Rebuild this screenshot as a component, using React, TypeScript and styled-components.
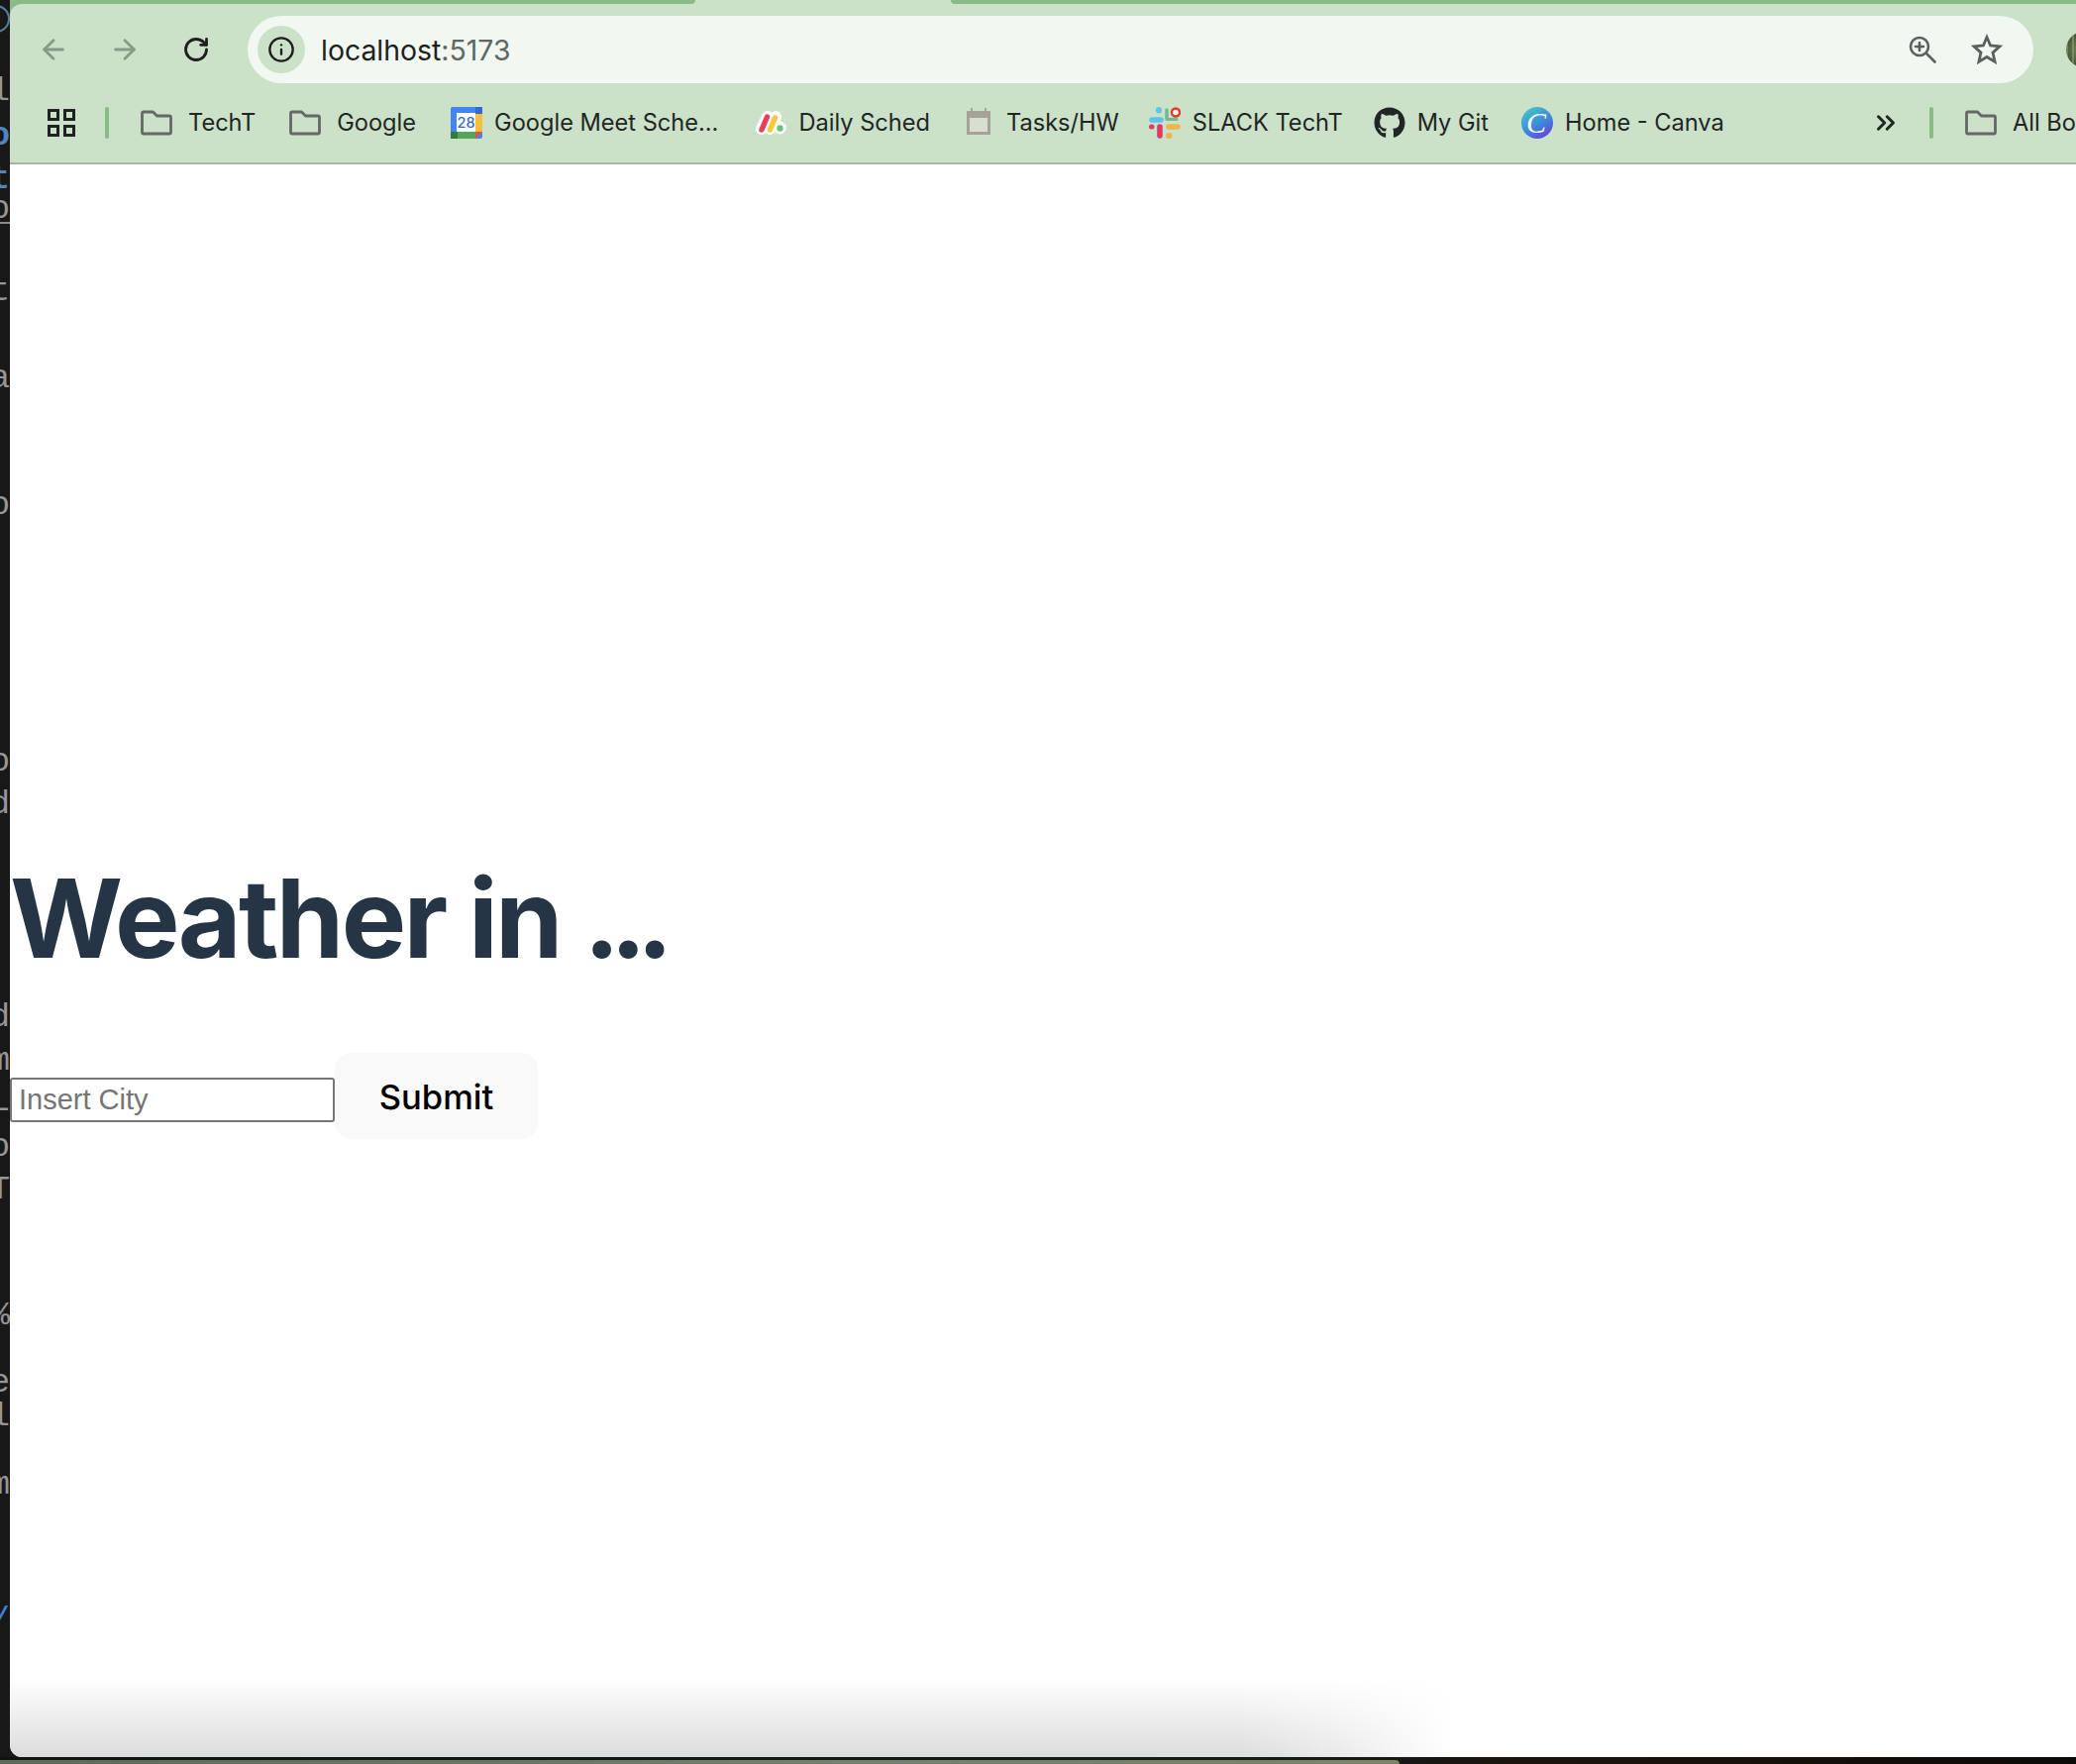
import React from 'react';
import styled, { createGlobalStyle } from 'styled-components';
import { ArrowLeft, ArrowRight, ChevronsRight, Info, RotateCw } from 'lucide-react';
import { FaGithub } from 'react-icons/fa';

const GlobalStyle = createGlobalStyle`
  html, body {
    margin: 0;
    padding: 0;
    background: #181818;
  }
  * {
    box-sizing: border-box;
  }
`;

const Screen = styled.div`
  width: 2096px;
  height: 1781px;
  display: flex;
  flex-direction: column;
  overflow: hidden;
  background: #181818;
`;

const Desk = styled.div`
  height: 1774px;
  display: flex;
`;

const EditorStrip = styled.div`
  width: 10px;
  flex-shrink: 0;
  display: flex;
  flex-direction: column;
  overflow: hidden;
  background: #181818;
`;

const CodeLine = styled.div<{ $gap: number; $color: string; $bold?: boolean; $underline?: boolean }>`
  height: 28px;
  flex-shrink: 0;
  margin-top: ${(p) => p.$gap}px;
  display: flex;
  justify-content: flex-end;
  align-items: center;
  white-space: nowrap;
  font-family: 'Liberation Mono', monospace;
  font-size: 33px;
  font-weight: ${(p) => (p.$bold ? 700 : 400)};
  color: ${(p) => p.$color};
  border-bottom: ${(p) => (p.$underline ? '2px solid #8a8a8a' : 'none')};
`;

const Ring = styled.div`
  width: 28px;
  height: 28px;
  flex-shrink: 0;
  margin: 5px 0 0 -18px;
  border: 2px solid #55809f;
  border-radius: 50%;
`;

const BrowserWindow = styled.div`
  flex: 1;
  min-width: 0;
  display: flex;
  flex-direction: column;
  overflow: hidden;
  background: #8aba85;
  border-bottom-left-radius: 12px;
`;

const TabStrip = styled.div`
  height: 4px;
  flex-shrink: 0;
  display: flex;
  background: #cbe1c8;
`;

const TabSegment = styled.div<{ $side: 'left' | 'right' }>`
  background: #8aba85;
  width: ${(p) => (p.$side === 'left' ? '692px' : 'auto')};
  flex: ${(p) => (p.$side === 'left' ? '0 0 auto' : '1')};
  margin-left: ${(p) => (p.$side === 'left' ? '0' : '258px')};
  border-bottom-right-radius: ${(p) => (p.$side === 'left' ? '8px' : '0')};
  border-bottom-left-radius: ${(p) => (p.$side === 'left' ? '0' : '8px')};
`;

const Toolbar = styled.div`
  height: 80px;
  flex-shrink: 0;
  display: flex;
  align-items: center;
  padding: 12px 0 0 8px;
  overflow: hidden;
  background: #cbe1c8;
  border-top-left-radius: 12px;
`;

const NavButton = styled.button<{ $muted?: boolean }>`
  width: 72px;
  height: 68px;
  flex-shrink: 0;
  padding: 0;
  display: flex;
  align-items: center;
  justify-content: center;
  border: none;
  background: none;
  color: ${(p) => (p.$muted ? '#879a87' : '#1f1f1f')};
`;

const Omnibox = styled.div`
  width: 1803px;
  height: 68px;
  flex-shrink: 0;
  margin-left: 16px;
  display: flex;
  align-items: center;
  padding: 0 15px 0 10px;
  background: #f1f8f1;
  border-radius: 34px;
`;

const InfoChip = styled.div`
  width: 48px;
  height: 48px;
  flex-shrink: 0;
  display: flex;
  align-items: center;
  justify-content: center;
  border-radius: 50%;
  background: #cbe1c8;
  color: #1f1f1f;
`;

const Url = styled.div`
  flex: 1;
  margin-left: 16px;
  font-family: Inter, sans-serif;
  font-size: 28.4px;
  color: #1f1f1f;
`;

const UrlPort = styled.span`
  color: #5f6663;
`;

const BoxAction = styled.div`
  width: 65px;
  display: flex;
  justify-content: center;
  color: #5c605d;
`;

const Avatar = styled.div`
  width: 36px;
  height: 36px;
  flex-shrink: 0;
  margin-left: 33px;
  border-radius: 50%;
  background:
    repeating-linear-gradient(to right, rgba(190, 200, 170, 0.35) 0 2px, transparent 2px 6px),
    radial-gradient(circle at 40% 50%, #6f8a5a, #3c4a2a 70%);
`;

const BookmarksBar = styled.div`
  height: 82px;
  flex-shrink: 0;
  display: flex;
  align-items: center;
  gap: 33px;
  padding-left: 38px;
  overflow: hidden;
  background: #cbe1c8;
  border-bottom: 2px solid #a3b8a0;
`;

const AppsIcon = styled.svg`
  width: 28px;
  height: 28px;
  flex-shrink: 0;
`;

const Divider = styled.div`
  width: 4px;
  height: 32px;
  flex-shrink: 0;
  margin: 0 -5px 0 -3px;
  border-radius: 2px;
  background: #8aba85;
`;

const Bookmark = styled.div<{ $nudge?: number }>`
  display: flex;
  align-items: center;
  gap: 12px;
  flex-shrink: 0;
  margin-left: ${(p) => p.$nudge ?? 0}px;
  font-family: Inter, sans-serif;
  font-size: 23.6px;
  color: #1f2624;
  white-space: nowrap;
`;

const BookmarkLabel = styled.span`
  margin-top: -2px;
`;

const LogoBox = styled.div`
  width: 32px;
  height: 32px;
  flex-shrink: 0;
  display: flex;
  align-items: center;
  justify-content: center;
  color: #1f2624;
`;

const FolderSvg = styled.svg`
  width: 40px;
  height: 26px;
  flex-shrink: 0;
`;

const OverflowButton = styled.div`
  margin-left: auto;
  display: flex;
  color: #1f2624;
`;

const EndDivider = styled(Divider)`
  margin: 0 -5px 0 -4px;
`;

const ClippedBookmark = styled(Bookmark)`
  width: 116px;
  overflow: hidden;
`;

const Page = styled.main`
  flex: 1;
  position: relative;
  background: #fff;
  border-bottom-left-radius: 12px;
  overflow: hidden;
`;

const BottomShade = styled.div`
  position: absolute;
  left: 0;
  bottom: 0;
  width: 1500px;
  height: 80px;
  background: linear-gradient(to top, #dcdcdc, rgba(220, 220, 220, 0));
  mask-image: linear-gradient(to right, #000 1240px, rgba(0, 0, 0, 0.6) 1340px, transparent 1460px);
`;

const Title = styled.h1`
  margin: 695px 0 0 0;
  font-family: Inter, sans-serif;
  font-size: 110px;
  font-weight: 700;
  line-height: 1.2;
  letter-spacing: -2.7px;
  color: #253546;
`;

const TitleDots = styled.span`
  letter-spacing: -10px;
`;

const CityForm = styled.form`
  display: flex;
  align-items: baseline;
  margin-top: 70px;
`;

const CityInput = styled.input`
  width: 328px;
  height: 45px;
  padding: 0 7px;
  border: 2px solid #767676;
  border-radius: 3px;
  background: #fff;
  font-family: 'Liberation Sans', sans-serif;
  font-size: 29px;
  &::placeholder {
    color: #757575;
  }
`;

const SubmitButton = styled.button`
  width: 205px;
  height: 87px;
  padding: 0;
  border: none;
  border-radius: 16px;
  background: #f9f9f9;
  font-family: Inter, sans-serif;
  font-size: 34.6px;
  font-weight: 500;
  color: #000;
`;

const Dock = styled.div`
  flex: 1;
  padding-top: 3px;
  background: linear-gradient(to right, #101414, #141c1e 60%, #1c130c 75%, #0c0a08);
`;

const DockShelf = styled.div`
  width: 1413px;
  height: 4px;
  border-top-right-radius: 6px;
  background: linear-gradient(to right, #5c6a58, #74806a 60%, #7c8468);
`;

const FolderIcon = () => (
  <FolderSvg viewBox="0 0 40 26" fill="none">
    <path
      d="M5.5 3.5a1.5 1.5 0 0 1 1.5-1.5h9.5l4 4h12.5a1.5 1.5 0 0 1 1.5 1.5v15a1.5 1.5 0 0 1-1.5 1.5H7a1.5 1.5 0 0 1-1.5-1.5z"
      stroke="#646966"
      strokeWidth="2.8"
      strokeLinejoin="round"
    />
  </FolderSvg>
);

const ZoomLens = () => (
  <svg width="30" height="30" viewBox="0 0 30 30" fill="none" stroke="currentColor" strokeWidth="2.6" strokeLinecap="round">
    <circle cx="12" cy="12" r="9" />
    <path d="M19 19l8.5 8.5" />
    <path d="M12 8v8M8 12h8" />
  </svg>
);

const StarOutline = () => (
  <svg width="32" height="32" viewBox="0 0 32 32" fill="none" stroke="currentColor" strokeWidth="2.8" strokeLinejoin="miter">
    <polygon points="16,3.5 19.6,12 29,12.9 22,19.1 24.1,28.4 16,23.5 7.9,28.4 10,19.1 3,12.9 12.4,12" />
  </svg>
);

const CalendarLogo = () => (
  <svg width="32" height="32" viewBox="0 0 32 32">
    <rect width="32" height="32" rx="2" fill="#4285f4" />
    <rect x="25" width="7" height="7" fill="#2f6bd0" />
    <rect x="25" y="7" width="7" height="18" fill="#f6bf3b" />
    <rect y="25" width="25" height="7" fill="#57a55a" />
    <rect y="25" width="7" height="7" fill="#2f7d3c" />
    <polygon points="25,25 32,25 25,32" fill="#e5533f" />
    <rect x="6" y="6" width="19" height="19" fill="#fff" />
    <text x="15.5" y="21" textAnchor="middle" fontFamily="Inter, sans-serif" fontSize="14.5" fontWeight="500" fill="#2f6bd0">
      28
    </text>
  </svg>
);

const MondayLogo = () => (
  <svg width="32" height="26" viewBox="0 0 32 26">
    <path d="M7 19L13 7M15.5 19L21 7" stroke="#fff" strokeWidth="12" strokeLinecap="round" />
    <circle cx="25.5" cy="18" r="6.5" fill="#fff" />
    <path d="M7 20L12.5 7" stroke="#e8405c" strokeWidth="5.4" strokeLinecap="round" />
    <path d="M15.5 20L20.5 8" stroke="#f8c73c" strokeWidth="5.4" strokeLinecap="round" />
    <circle cx="25.5" cy="18.5" r="3.2" fill="#5ccc76" />
  </svg>
);

const TasksLogo = () => (
  <svg width="32" height="32" viewBox="0 0 32 32">
    <path d="M4 4h4V1h2v3h12V1h2v3h4v24H4z" fill="#a7a297" />
    <rect x="7" y="11" width="18" height="14" fill="#d8dfd0" />
  </svg>
);

const SlackLogo = () => (
  <svg width="32" height="32" viewBox="0 0 32 32" fill="none" strokeLinecap="round">
    <path d="M3 13h9" stroke="#5fc2ef" strokeWidth="5.5" />
    <path d="M10 3v.5" stroke="#5fc2ef" strokeWidth="6" />
    <path d="M18 3v9" stroke="#6dbb8e" strokeWidth="3.5" />
    <path d="M19 12.5h9" stroke="#6dbb8e" strokeWidth="3" />
    <circle cx="27" cy="5.5" r="4" fill="#fff" stroke="#e8362d" strokeWidth="2.4" />
    <path d="M11 20v9" stroke="#dc3d67" strokeWidth="5.6" />
    <path d="M2.5 20h.5" stroke="#dc3d67" strokeWidth="5" />
    <path d="M20 20h9" stroke="#ecb64a" strokeWidth="5.5" />
    <path d="M20 29h.5" stroke="#ecb64a" strokeWidth="6" />
  </svg>
);

const CanvaLogo = () => (
  <svg width="32" height="32" viewBox="0 0 32 32">
    <defs>
      <linearGradient id="canvaFill" x1="0.2" y1="0" x2="0.8" y2="1">
        <stop offset="0" stopColor="#45c4c8" />
        <stop offset="0.55" stopColor="#3d8ad8" />
        <stop offset="1" stopColor="#6a3ce0" />
      </linearGradient>
    </defs>
    <circle cx="16" cy="16" r="16" fill="url(#canvaFill)" />
    <text x="15" y="25.5" textAnchor="middle" fontFamily="'Liberation Serif', serif" fontStyle="italic" fontSize="30" fill="#fff">
      C
    </text>
  </svg>
);

const codeLines = [
  { y: 92, text: 'tl', color: '#969696' },
  { y: 137, text: 'o', color: '#4f86bd', bold: true },
  { y: 181, text: 't', color: '#4f86bd', bold: true },
  { y: 212, text: 'o', color: '#969696', underline: true },
  { y: 294, text: 't', color: '#969696' },
  { y: 382, text: 'a', color: '#969696' },
  { y: 510, text: 'o', color: '#969696' },
  { y: 769, text: 'o', color: '#969696' },
  { y: 812, text: 'd', color: '#969696' },
  { y: 1027, text: 'd', color: '#969696' },
  { y: 1071, text: 'm', color: '#969696' },
  { y: 1112, text: 'L', color: '#969696' },
  { y: 1158, text: 'o', color: '#969696' },
  { y: 1201, text: 'T', color: '#969696' },
  { y: 1328, text: '%', color: '#969696' },
  { y: 1396, text: 'e', color: '#969696' },
  { y: 1430, text: 'l', color: '#969696' },
  { y: 1499, text: 'm', color: '#969696' },
  { y: 1636, text: '/', color: '#3f7fd0' },
];

const RING_BOTTOM = 33;

export default function App() {
  return (
    <Screen>
      <GlobalStyle />
      <Desk>
        <EditorStrip>
          <Ring />
          {codeLines.map((line, i) => {
            const prev = i === 0 ? RING_BOTTOM : codeLines[i - 1].y + 14;
            return (
              <CodeLine
                key={line.y}
                $gap={line.y - 14 - prev}
                $color={line.color}
                $bold={line.bold}
                $underline={line.underline}
              >
                {line.text}
              </CodeLine>
            );
          })}
        </EditorStrip>
        <BrowserWindow>
          <TabStrip>
            <TabSegment $side="left" />
            <TabSegment $side="right" />
          </TabStrip>
          <Toolbar>
            <NavButton $muted>
              <ArrowLeft size={32} strokeWidth={2.1} />
            </NavButton>
            <NavButton $muted>
              <ArrowRight size={32} strokeWidth={2.1} />
            </NavButton>
            <NavButton>
              <RotateCw size={28} strokeWidth={2.4} />
            </NavButton>
            <Omnibox>
              <InfoChip>
                <Info size={28} strokeWidth={2} />
              </InfoChip>
              <Url>
                localhost<UrlPort>:5173</UrlPort>
              </Url>
              <BoxAction>
                <ZoomLens />
              </BoxAction>
              <BoxAction>
                <StarOutline />
              </BoxAction>
            </Omnibox>
            <Avatar />
          </Toolbar>
          <BookmarksBar>
            <AppsIcon viewBox="0 0 28 28" fill="none" stroke="#202124" strokeWidth="3">
              <rect x="1.5" y="1.5" width="9" height="9" />
              <rect x="17.5" y="1.5" width="9" height="9" />
              <rect x="1.5" y="17.5" width="9" height="9" />
              <rect x="17.5" y="17.5" width="9" height="9" />
            </AppsIcon>
            <Divider />
            <Bookmark>
              <FolderIcon />
              <BookmarkLabel>TechT</BookmarkLabel>
            </Bookmark>
            <Bookmark $nudge={-3}>
              <FolderIcon />
              <BookmarkLabel>Google</BookmarkLabel>
            </Bookmark>
            <Bookmark $nudge={2}>
              <LogoBox>
                <CalendarLogo />
              </LogoBox>
              <BookmarkLabel>Google Meet Sche...</BookmarkLabel>
            </Bookmark>
            <Bookmark $nudge={4}>
              <LogoBox>
                <MondayLogo />
              </LogoBox>
              <BookmarkLabel>Daily Sched</BookmarkLabel>
            </Bookmark>
            <Bookmark>
              <LogoBox>
                <TasksLogo />
              </LogoBox>
              <BookmarkLabel>Tasks/HW</BookmarkLabel>
            </Bookmark>
            <Bookmark $nudge={-3}>
              <LogoBox>
                <SlackLogo />
              </LogoBox>
              <BookmarkLabel>SLACK TechT</BookmarkLabel>
            </Bookmark>
            <Bookmark $nudge={-2}>
              <LogoBox>
                <FaGithub size={32} />
              </LogoBox>
              <BookmarkLabel>My Git</BookmarkLabel>
            </Bookmark>
            <Bookmark>
              <LogoBox>
                <CanvaLogo />
              </LogoBox>
              <BookmarkLabel>Home - Canva</BookmarkLabel>
            </Bookmark>
            <OverflowButton>
              <ChevronsRight size={30} strokeWidth={2.4} />
            </OverflowButton>
            <EndDivider />
            <ClippedBookmark>
              <FolderIcon />
              <BookmarkLabel>All Bookmarks</BookmarkLabel>
            </ClippedBookmark>
          </BookmarksBar>
          <Page>
            <Title>
              Weather in <TitleDots>...</TitleDots>
            </Title>
            <CityForm>
              <CityInput placeholder="Insert City" />
              <SubmitButton type="button">Submit</SubmitButton>
            </CityForm>
            <BottomShade />
          </Page>
        </BrowserWindow>
      </Desk>
      <Dock>
        <DockShelf />
      </Dock>
    </Screen>
  );
}
